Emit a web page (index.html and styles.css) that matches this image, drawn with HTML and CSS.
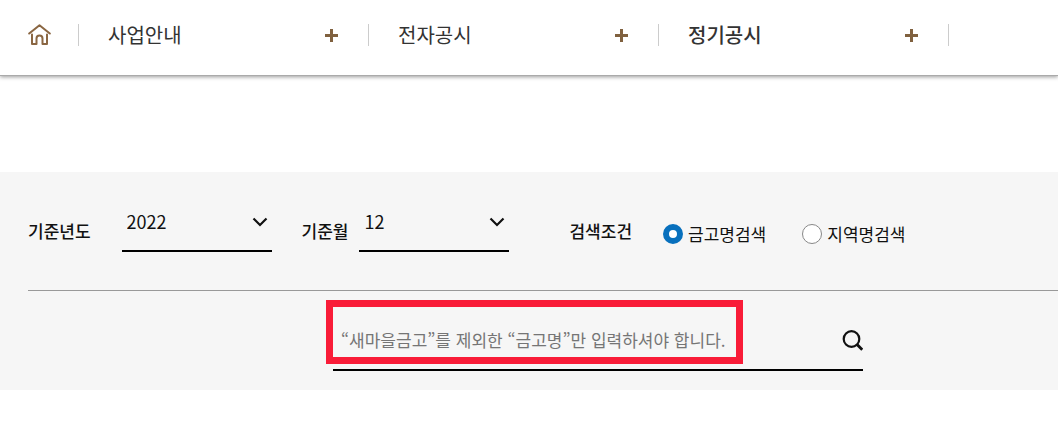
FILE: index.html
```html
<!DOCTYPE html>
<html lang="ko">
<head>
<meta charset="utf-8">
<meta name="viewport" content="width=device-width, initial-scale=1">
<title>정기공시</title>
<link rel="stylesheet" href="styles.css">
</head>
<body>
<header class="topbar">
  <nav class="crumbs">
    <a class="home" href="#" aria-label="홈">
      <svg width="24" height="22" viewBox="0 0 24 22" fill="none" stroke="currentColor" stroke-width="2" stroke-linecap="round" stroke-linejoin="round"><path d="M1.200 9.500 11.500 1.200 21.800 9.500M4 10.500V20h4.500v-5.500a3 3 0 0 1 6 0V20H19v-9.500"/></svg>
    </a>
    <button class="crumb" type="button">사업안내
      <svg width="13" height="13" viewBox="0 0 13 13" stroke="currentColor" stroke-width="3"><path d="M6.500 0v13M0 6.500h13"/></svg>
    </button>
    <button class="crumb" type="button">전자공시
      <svg width="13" height="13" viewBox="0 0 13 13" stroke="currentColor" stroke-width="3"><path d="M6.500 0v13M0 6.500h13"/></svg>
    </button>
    <button class="crumb current" type="button">정기공시
      <svg width="13" height="13" viewBox="0 0 13 13" stroke="currentColor" stroke-width="3"><path d="M6.500 0v13M0 6.500h13"/></svg>
    </button>
  </nav>
</header>
<main>
  <form class="panel">
    <div class="filters">
      <label class="label" for="year">기준년도</label>
      <div class="select year">
        <select id="year"><option>2022</option></select>
        <svg class="chevron" width="16" height="10" viewBox="0 0 16 10" fill="none" stroke="currentColor" stroke-width="2.200"><path d="m1.500 1.500 6.500 6.500 6.500-6.500"/></svg>
      </div>
      <label class="label" for="month">기준월</label>
      <div class="select month">
        <select id="month"><option>12</option></select>
        <svg class="chevron" width="16" height="10" viewBox="0 0 16 10" fill="none" stroke="currentColor" stroke-width="2.200"><path d="m1.500 1.500 6.500 6.500 6.500-6.500"/></svg>
      </div>
      <span class="label" id="condition">검색조건</span>
      <div class="radios" role="radiogroup" aria-labelledby="condition">
        <label class="radio"><input type="radio" name="kind" checked>금고명검색</label>
        <label class="radio"><input type="radio" name="kind">지역명검색</label>
      </div>
    </div>
    <div class="search">
      <input class="query" type="text" aria-label="금고명" placeholder="“새마을금고”를 제외한 “금고명”만 입력하셔야 합니다.">
      <button class="submit" type="submit" aria-label="검색">
        <svg width="21" height="21" viewBox="0 0 21 21" fill="none" stroke="currentColor" stroke-width="2.200"><circle cx="9.500" cy="9" r="7.800"/><path d="m14.800 14.300 5.500 5.500" stroke-width="3"/></svg>
      </button>
      <span class="highlight"></span>
    </div>
  </form>
</main>
</body>
</html>
```
FILE: styles.css
```css
* { box-sizing: border-box; }
body {
  margin: 0;
  background: #fff;
  color: #111;
  font: 17px/26px "Noto Sans CJK KR", sans-serif;
}
button, input, select { font: inherit; color: inherit; }
button { padding: 0; border: 0; background: none; cursor: pointer; }
svg { display: block; flex: none; }

.topbar {
  padding: 24px 28px 29px;
  border-bottom: 1px solid #aaa;
  box-shadow: 0 1px 4px rgba(0, 0, 0, .4);
}
.crumbs { display: flex; height: 22px; }
.home {
  display: flex;
  align-items: center;
  width: 51px;
  border-right: 1px solid #ccc;
  color: #8a6642;
}
.crumb {
  display: flex;
  flex: 0 1 290px;
  align-items: center;
  justify-content: space-between;
  padding: 0 30px 0 29px;
  border-right: 1px solid #ccc;
  color: #333;
  font-size: 20px;
}
.crumb svg { color: #80613f; }
.current { font-weight: 500; }

.panel {
  margin-top: 96px;
  padding: 0 0 19px 28px;
  background: #f6f6f6;
}
.filters {
  display: flex;
  align-items: center;
  padding: 20px 0;
  border-bottom: 1px solid #999;
}
.label { font-weight: 500; white-space: nowrap; }
.select {
  position: relative;
  width: 150px;
  margin-bottom: 18px;
}
.year { margin-right: 30px; margin-left: 31px; }
.month { margin-right: 60px; margin-left: 11px; }
.select select {
  width: 100%;
  height: 60px;
  padding: 0 30px 0 5px;
  border: 0;
  border-bottom: 2px solid #000;
  border-radius: 0;
  background: none;
  font-size: 18px;
  appearance: none;
}
.chevron {
  position: absolute;
  top: 25px;
  right: 4px;
  pointer-events: none;
}
.radios { display: flex; gap: 36px; margin-top: 5px; margin-left: 31px; }
.radio { display: flex; align-items: center; gap: 5px; white-space: nowrap; }
.radio input {
  width: 20px;
  height: 20px;
  margin: 0;
  border: 1px solid #888;
  border-radius: 50%;
  background: #fff;
  appearance: none;
}
.radio input:checked { border: 6px solid #0870bd; }

.search {
  position: relative;
  display: flex;
  align-items: center;
  max-width: 530px;
  height: 60px;
  margin: 20px 0 0 305px;
  border-bottom: 2px solid #000;
}
.query {
  flex: 1;
  min-width: 0;
  padding: 0 8px;
  border: 0;
  background: none;
}
.query::placeholder { color: #757575; opacity: 1; }
.highlight {
  position: absolute;
  top: -11px;
  left: -7px;
  width: 417px;
  height: 64px;
  border: 7px solid #f91c38;
  pointer-events: none;
}
```
